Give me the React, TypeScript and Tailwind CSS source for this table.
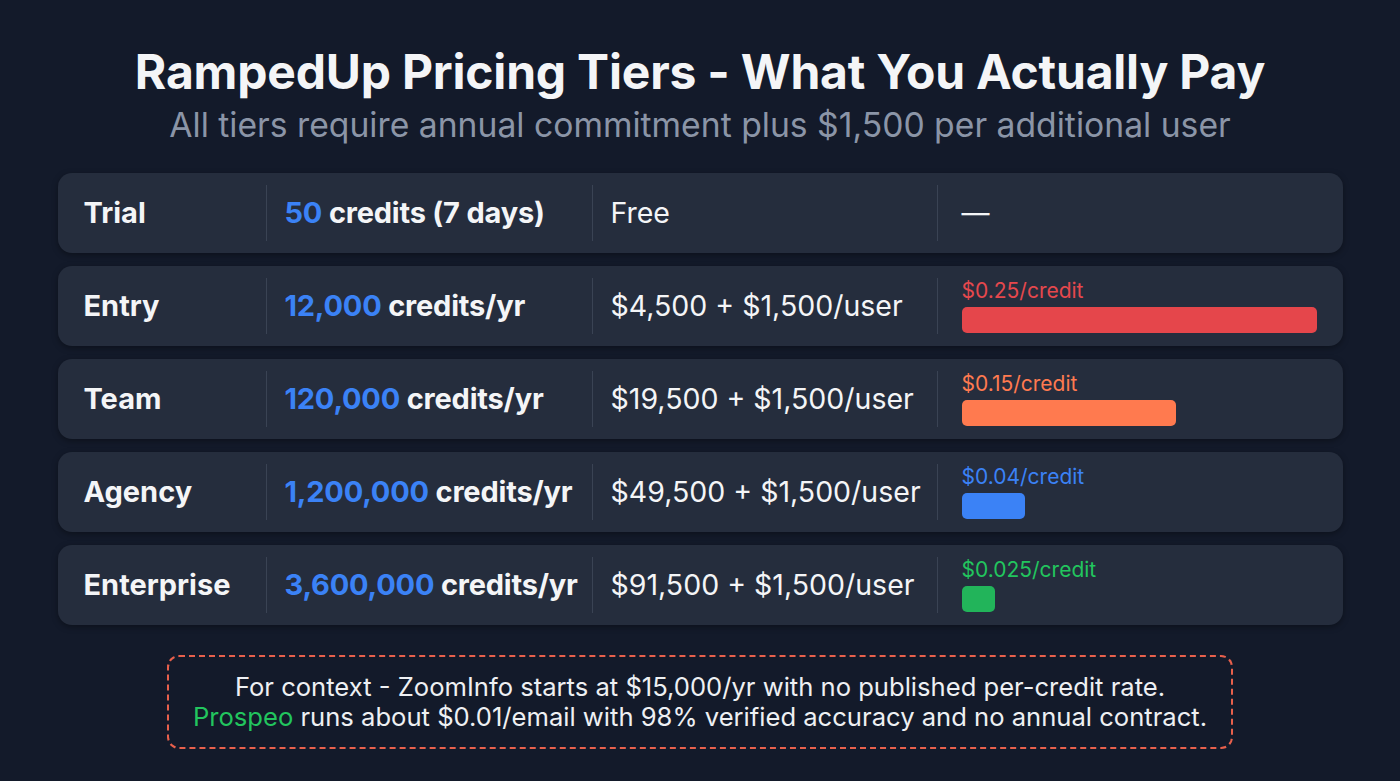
import React from "react";

type Tier = {
  name: string;
  credits: string;
  suffix: string;
  price: string;
  rate?: string;
  bar?: number;
  color?: string;
  barColor?: string;
};

const tiers: Tier[] = [
  { name: "Trial", credits: "50", suffix: "credits (7 days)", price: "Free" },
  { name: "Entry", credits: "12,000", suffix: "credits/yr", price: "$4,500 + $1,500/user", rate: "$0.25/credit", bar: 355, color: "text-[#e5484d]", barColor: "bg-[#e5464b]" },
  { name: "Team", credits: "120,000", suffix: "credits/yr", price: "$19,500 + $1,500/user", rate: "$0.15/credit", bar: 214, color: "text-[#ff7a50]", barColor: "bg-[#ff7a4f]" },
  { name: "Agency", credits: "1,200,000", suffix: "credits/yr", price: "$49,500 + $1,500/user", rate: "$0.04/credit", bar: 63, color: "text-[#3b82f6]", barColor: "bg-[#3b82f6]" },
  { name: "Enterprise", credits: "3,600,000", suffix: "credits/yr", price: "$91,500 + $1,500/user", rate: "$0.025/credit", bar: 33, color: "text-[#22c55e]", barColor: "bg-[#22b45a]" },
];

export default function App() {
  return (
    <div
      className="w-[1400px] h-[781px] bg-[#131a2a] flex flex-col items-center text-white overflow-hidden"
      style={{ fontFamily: "Inter, 'Noto Sans', sans-serif" }}
    >
      <h1 className="mt-[44px] text-[48px] leading-[56px] font-bold tracking-[-0.2px] text-[#f4f5f7]">
        RampedUp Pricing Tiers - What You Actually Pay
      </h1>
      <p className="mt-[5px] text-[33.7px] leading-[40px] text-[#8b95a7]">
        All tiers require annual commitment plus $1,500 per additional user
      </p>

      <div className="mt-[28px] w-[1285px] flex flex-col gap-[13px]">
        {tiers.map((t) => (
          <div
            key={t.name}
            className="h-[80px] rounded-[14px] bg-[#252d3d] shadow-[0_2px_6px_rgba(0,0,0,0.35)] grid grid-cols-[208px_326px_345px_1fr] py-[12px]"
          >
            <div className="flex items-center pl-[26px] text-[29px] font-bold text-[#f4f5f7]">
              {t.name}
            </div>
            <div className="flex items-center pl-[18px] border-l border-[#3a4354] text-[29px] font-bold text-[#f4f5f7] whitespace-nowrap tracking-[-0.2px]">
              <span>
                <span className="text-[#3b82f6]">{t.credits}</span> {t.suffix}
              </span>
            </div>
            <div className="flex items-center pl-[18px] border-l border-[#3a4354] text-[28.5px] text-[#f4f5f7] whitespace-nowrap">
              {t.price}
            </div>
            <div className="flex flex-col justify-center pl-[24px] border-l border-[#3a4354]">
              {t.rate ? (
                <>
                  <span className={`text-[21px] leading-[24px] ${t.color}`}>{t.rate}</span>
                  <div
                    className={`mt-[4px] h-[26px] rounded-[5px] ${t.barColor}`}
                    style={{ width: t.bar }}
                  />
                </>
              ) : (
                <span className="text-[28px] text-[#f4f5f7]">—</span>
              )}
            </div>
          </div>
        ))}
      </div>

      <div className="mt-[30px] w-[1066px] h-[94px] rounded-[12px] border-2 border-dashed border-[#e8604c] flex flex-col items-center justify-center text-[25.6px] leading-[30px] text-[#eef0f3]">
        <p>For context - ZoomInfo starts at $15,000/yr with no published per-credit rate.</p>
        <p>
          <span className="text-[#22c55e]">Prospeo</span> runs about $0.01/email with 98% verified accuracy and no annual contract.
        </p>
      </div>
    </div>
  );
}
